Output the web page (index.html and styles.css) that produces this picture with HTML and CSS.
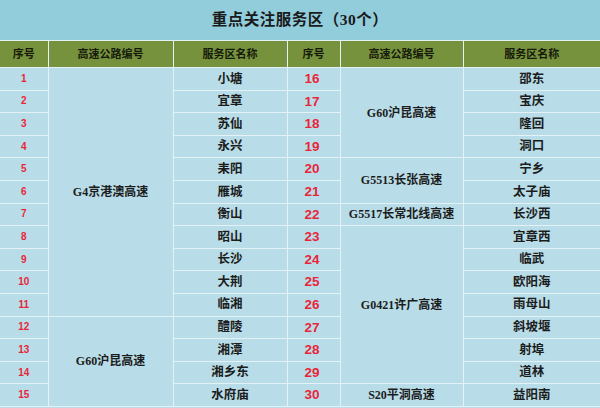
FILE: index.html
```html
<!DOCTYPE html>
<html lang="zh">
<head>
<meta charset="utf-8">
<link rel="stylesheet" href="styles.css">
</head>
<body>
<table class="sheet">
<colgroup>
<col class="c1"><col class="c2"><col class="c3"><col class="c4"><col class="c5"><col class="c6">
</colgroup>
<tr class="title"><td colspan="6">重点关注服务区（30个）</td></tr>
<tr class="head"><td>序号</td><td>高速公路编号</td><td>服务区名称</td><td>序号</td><td>高速公路编号</td><td>服务区名称</td></tr>
<tr><td class="n">1</td><td class="road" rowspan="11">G4京港澳高速</td><td class="name">小塘</td><td class="n2">16</td><td class="road" rowspan="4">G60沪昆高速</td><td class="name">邵东</td></tr>
<tr><td class="n">2</td><td class="name">宜章</td><td class="n2">17</td><td class="name">宝庆</td></tr>
<tr><td class="n">3</td><td class="name">苏仙</td><td class="n2">18</td><td class="name">隆回</td></tr>
<tr><td class="n">4</td><td class="name">永兴</td><td class="n2">19</td><td class="name">洞口</td></tr>
<tr><td class="n">5</td><td class="name">耒阳</td><td class="n2">20</td><td class="road" rowspan="2">G5513长张高速</td><td class="name">宁乡</td></tr>
<tr><td class="n">6</td><td class="name">雁城</td><td class="n2">21</td><td class="name">太子庙</td></tr>
<tr><td class="n">7</td><td class="name">衡山</td><td class="n2">22</td><td class="road">G5517长常北线高速</td><td class="name">长沙西</td></tr>
<tr><td class="n">8</td><td class="name">昭山</td><td class="n2">23</td><td class="road" rowspan="7">G0421许广高速</td><td class="name">宜章西</td></tr>
<tr><td class="n">9</td><td class="name">长沙</td><td class="n2">24</td><td class="name">临武</td></tr>
<tr><td class="n">10</td><td class="name">大荆</td><td class="n2">25</td><td class="name">欧阳海</td></tr>
<tr><td class="n">11</td><td class="name">临湘</td><td class="n2">26</td><td class="name">雨母山</td></tr>
<tr><td class="n">12</td><td class="road" rowspan="4">G60沪昆高速</td><td class="name">醴陵</td><td class="n2">27</td><td class="name">斜坡堰</td></tr>
<tr><td class="n">13</td><td class="name">湘潭</td><td class="n2">28</td><td class="name">射埠</td></tr>
<tr><td class="n">14</td><td class="name">湘乡东</td><td class="n2">29</td><td class="name">道林</td></tr>
<tr><td class="n">15</td><td class="name">水府庙</td><td class="n2">30</td><td class="road">S20平洞高速</td><td class="name">益阳南</td></tr>
</table>
</body>
</html>
```
FILE: styles.css
```css
html, body {
  margin: 0;
  padding: 0;
  background: #b8dde8;
}
.sheet {
  width: 600px;
  border-collapse: collapse;
  table-layout: fixed;
  font-family: "Liberation Serif", "Noto Sans CJK SC", serif;
  font-weight: bold;
  color: #1c1c1c;
}
.c1 { width: 48px; }
.c2 { width: 125px; }
.c3 { width: 114px; }
.c4 { width: 53px; }
.c5 { width: 123px; }
.c6 { width: 137px; }
.sheet td {
  border: 1px solid #e4f2f6;
  text-align: center;
  vertical-align: middle;
  padding: 0;
  background: #b8dde8;
  height: 21.6px;
  font-size: 12.5px;
  line-height: 1;
}
.sheet tr.title td {
  height: 40px;
  background: #92cddc;
  font-size: 15.5px;
  border-top: none;
  border-left: none;
  border-right: none;
  color: #1a1a1a;
  letter-spacing: 0.5px;
}
.sheet tr.head td {
  height: 26px;
  background: #76923c;
  font-size: 11px;
  color: #161a0c;
}
.sheet td:first-child { border-left: none; }
.sheet td:last-child { border-right: none; }
.sheet td.n {
  color: #e8263a;
  font-family: "Liberation Sans", "Noto Sans CJK SC", sans-serif;
  font-size: 10px;
}
.sheet td.n2 {
  color: #e8263a;
  font-family: "Liberation Sans", "Noto Sans CJK SC", sans-serif;
  font-size: 13.5px;
  text-align: left;
  padding-left: 17px;
}
.sheet td.road {
  font-size: 12px;
}
.sheet td.name {
  font-size: 12.5px;
}
```
